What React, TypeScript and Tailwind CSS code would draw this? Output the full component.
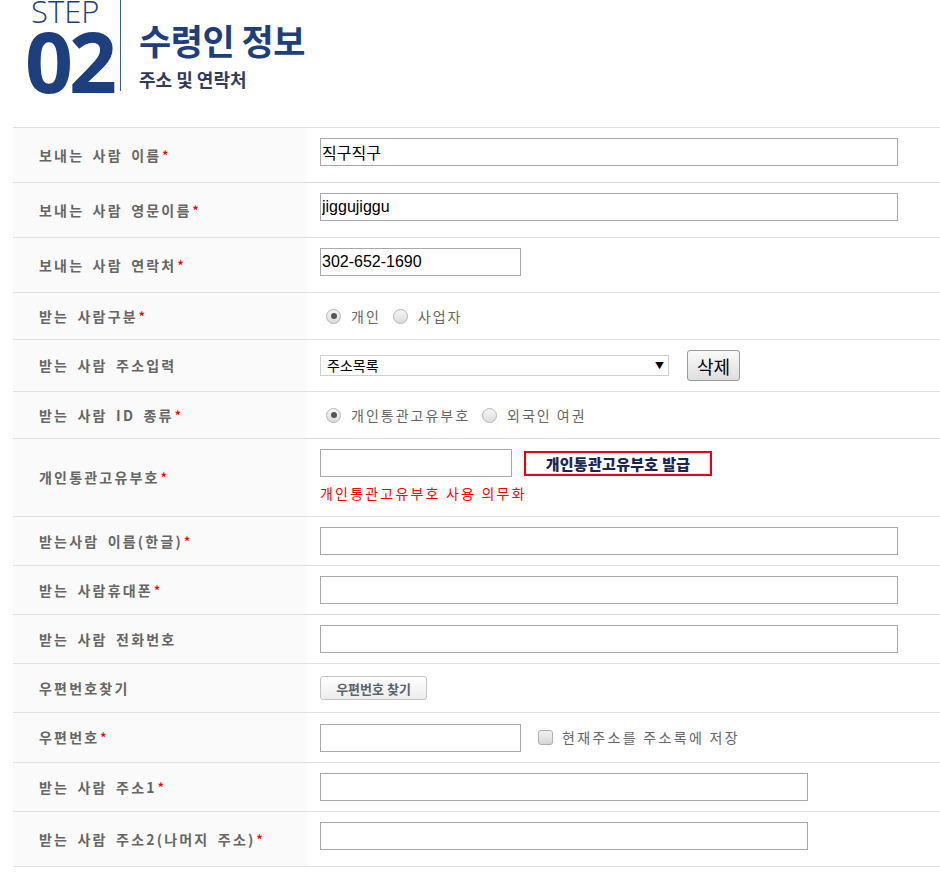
import type { ReactNode } from "react";

const KR = { fontFamily: '"Noto Sans CJK KR", "Noto Sans", sans-serif' };

interface RowProps {
  label: string;
  required?: boolean;
  height: string;
  last?: boolean;
  top?: boolean;
  children?: ReactNode;
}

function Row({ label, required, height, last, top, children }: RowProps) {
  return (
    <div
      className={`flex border-t border-[#e0e0e0] ${height} ${last ? "border-b" : ""}`}
    >
      <div className="w-[294px] shrink-0 bg-[#fafafa] pl-[26px] flex items-center">
        <span className="text-[14px] font-bold text-[#666] tracking-[2.2px] [word-spacing:3px]">
          {label}
          {required && (
            <span className="text-[#f00] text-[12px] font-bold relative -top-[1px] ml-[1px]">*</span>
          )}
        </span>
      </div>
      <div
        className={`flex-1 pl-[13px] flex flex-col ${top ? "justify-start pt-[10px]" : "justify-center"}`}
      >
        {children}
      </div>
    </div>
  );
}

function TextBox({ width, value }: { width: string; value?: string }) {
  return (
    <input
      readOnly
      value={value ?? ""}
      className={`${width} h-[28px] border border-[#a9a9a9] bg-white px-[1px] text-[16px] text-black outline-none`}
      style={{ fontFamily: '"Liberation Sans", "Noto Sans CJK KR", sans-serif' }}
    />
  );
}

function Radio({ checked, label }: { checked?: boolean; label: string }) {
  return (
    <span className="flex items-center mr-[6px]">
      <span className="w-[15px] h-[15px] rounded-full border border-[#b5b5b5] bg-gradient-to-b from-[#f6f6f6] to-[#dcdcdc] flex items-center justify-center mr-[10px] ml-[6px]">
        {checked && <span className="w-[6px] h-[6px] rounded-full bg-[#555]" />}
      </span>
      <span className="text-[14px] text-[#666] tracking-[2px]">{label}</span>
    </span>
  );
}

export default function App() {
  return (
    <div className="w-[940px] bg-white overflow-hidden" style={KR}>
      {/* step header */}
      <div className="h-[127px] flex pl-[25px]">
        <div className="flex flex-col w-[88px]">
          <div
            className="h-[22px] text-[31px] leading-[22px] font-light text-[#1e3f7d] pl-[6px] overflow-visible"
            style={{ fontFamily: '"Open Sans", sans-serif' }}
          >
            STEP
          </div>
          <div
            className="text-[84px] leading-[70px] font-bold text-[#1e3f7d] tracking-[-4px] mt-[4px]"
            style={{ fontFamily: '"Open Sans", sans-serif' }}
          >
            02
          </div>
        </div>
        <div className="w-px h-[91px] bg-[#3b5c98] ml-[7px]" />
        <div className="ml-[18px] flex flex-col">
          <div className="text-[35px] leading-none font-bold text-[#1e3f7d] tracking-[-0.5px] mt-[22px]">
            수령인 정보
          </div>
          <div className="text-[18px] leading-none font-bold text-[#2e3b5e] mt-[13px]">
            주소 및 연락처
          </div>
        </div>
      </div>

      {/* form table */}
      <div className="ml-[13px]">
        <Row label="보내는 사람 이름" required height="h-[55px]" top>
          <TextBox width="w-[578px]" value="직구직구" />
        </Row>
        <Row label="보내는 사람 영문이름" required height="h-[55px]" top>
          <TextBox width="w-[578px]" value="jiggujiggu" />
        </Row>
        <Row label="보내는 사람 연락처" required height="h-[55px]" top>
          <TextBox width="w-[201px]" value="302-652-1690" />
        </Row>
        <Row label="받는 사람구분" required height="h-[47px]">
          <div className="flex items-center">
            <Radio checked label="개인" />
            <Radio label="사업자" />
          </div>
        </Row>
        <Row label="받는 사람 주소입력" height="h-[52px]">
          <div className="flex items-center">
            <div className="w-[349px] h-[21px] border border-[#cfcfcf] bg-white flex items-center justify-between pl-[6px] pr-[4px]">
              <span className="text-[14px] text-black">주소목록</span>
              <span className="text-[9px] text-black leading-none">▼</span>
            </div>
            <button className="ml-[18px] w-[53px] h-[31px] border border-[#9a9a9a] rounded-[3px] bg-gradient-to-b from-[#fafafa] to-[#dedede] text-[18px] text-black leading-none">
              삭제
            </button>
          </div>
        </Row>
        <Row label="받는 사람 ID 종류" required height="h-[47px]">
          <div className="flex items-center">
            <Radio checked label="개인통관고유부호" />
            <Radio label="외국인 여권" />
          </div>
        </Row>
        <Row label="개인통관고유부호" required height="h-[78px]" top>
          <div className="flex items-center">
            <TextBox width="w-[192px]" />
            <button className="ml-[12px] w-[188px] h-[25px] border-2 border-[#e2001a] bg-white flex items-center justify-center">
              <span className="w-full h-full border border-[#e6e6e6] flex items-center justify-center text-[15px] font-black text-[#1b2553] leading-none tracking-[0.3px]">
                개인통관고유부호 발급
              </span>
            </button>
          </div>
          <div className="text-[14px] text-[#f00] tracking-[2.2px] mt-[9px] leading-none">
            개인통관고유부호 사용 의무화
          </div>
        </Row>
        <Row label="받는사람 이름(한글)" required height="h-[49px]">
          <TextBox width="w-[578px]" />
        </Row>
        <Row label="받는 사람휴대폰" required height="h-[49px]">
          <TextBox width="w-[578px]" />
        </Row>
        <Row label="받는 사람 전화번호" height="h-[49px]">
          <TextBox width="w-[578px]" />
        </Row>
        <Row label="우편번호찾기" height="h-[49px]">
          <button className="w-[107px] h-[24px] border border-[#c4c4c4] rounded-[3px] bg-gradient-to-b from-white to-[#ececec] text-[13px] font-bold text-[#5a6470] leading-none">
            우편번호 찾기
          </button>
        </Row>
        <Row label="우편번호" required height="h-[50px]">
          <div className="flex items-center">
            <TextBox width="w-[201px]" />
            <span className="ml-[17px] w-[15px] h-[15px] rounded-[3px] border border-[#b0b0b0] bg-gradient-to-b from-[#f2f2f2] to-[#d6d6d6]" />
            <span className="ml-[9px] text-[14px] text-[#666] tracking-[2.3px]">
              현재주소를 주소록에 저장
            </span>
          </div>
        </Row>
        <Row label="받는 사람 주소1" required height="h-[49px]">
          <TextBox width="w-[488px]" />
        </Row>
        <Row label="받는 사람 주소2(나머지 주소)" required height="h-[56px]" last top>
          <TextBox width="w-[488px]" />
        </Row>
      </div>
    </div>
  );
}
